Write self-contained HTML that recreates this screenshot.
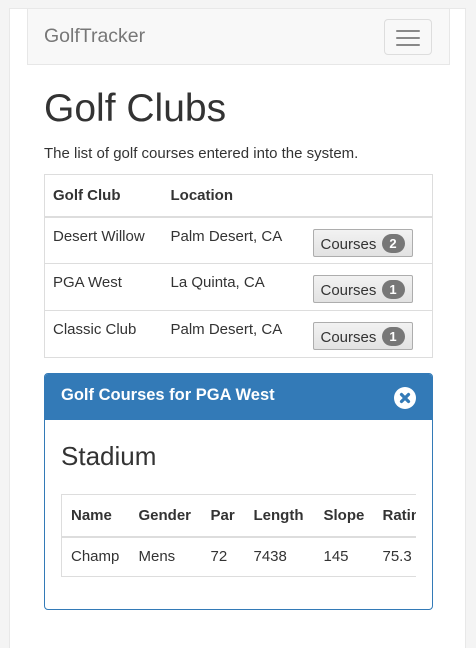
<!DOCTYPE html>
<html><head><style>
*{box-sizing:border-box}
body{margin:0;background:#f4f4f4;font-family:"Liberation Sans",sans-serif;color:#333;font-size:15px;width:476px;height:636px;overflow:hidden;position:relative}
.wrap{position:absolute;left:9px;top:8px;width:457px;height:640px;background:#fff;border-left:1px solid #e8e8e8;border-right:1px solid #e8e8e8;border-top:1px solid #e8e8e8}
.nav{position:absolute;left:17px;top:0;width:423px;height:56px;background:#f8f8f8;border:1px solid #e7e7e7;border-top:none}
.brand{position:absolute;left:16px;top:16px;font-size:19.5px;color:#777}
.tog{position:absolute;left:356px;top:10px;width:48px;height:36px;border:1px solid #ddd;border-radius:4px}
.tog i{position:absolute;left:11px;width:24px;height:2px;background:#888;border-radius:1px}
h1{position:absolute;left:34px;top:78px;margin:0;font-size:39px;font-weight:400;line-height:44px}
p{position:absolute;left:34px;top:136px;margin:0;font-size:15px}
table{border-collapse:collapse;font-size:15px}
.t1{position:absolute;left:34px;top:165px;width:389px;border:1px solid #ddd}
.t1 th,.t1 td{text-align:left;padding:0 8px;vertical-align:top;padding-top:12px}
.t1 th{height:42px;border-bottom:2px solid #ddd}
.t1 td{height:47px;border-top:1px solid #ddd;padding-top:10px}
.btn{display:inline-block;margin-top:1px;width:100px;height:28px;border:1px solid #adadad;border-radius:2px;background:linear-gradient(#f2f2f2,#e2e2e2);font-size:15px;padding:4px 0 0 7px;color:#333;white-space:nowrap}
.badge{display:inline-block;background:#777;color:#fff;border-radius:10px;font-size:13px;font-weight:bold;width:23px;height:19px;text-align:center;line-height:19px;vertical-align:1px;margin-left:1px}
.panel{position:absolute;left:34px;top:364px;width:389px;height:237px;border:1px solid #337ab7;border-radius:4px;overflow:hidden}
.ph{height:46px;background:#337ab7;color:#fff;font-size:16.5px;font-weight:bold;padding:12px 0 0 16px;position:relative}
.x{position:absolute;right:16px;top:13px;width:22px;height:22px;border-radius:50%;background:#fff}
h3{position:absolute;left:16px;top:67px;margin:0;font-size:26px;font-weight:400}
.tw{position:absolute;left:16px;top:120px;width:355px;overflow:hidden}
.t2{border:1px solid #ddd;white-space:nowrap;width:420px;table-layout:fixed}
.t2 th,.t2 td{text-align:left;padding:0 0 0 9px;}
.t2 th{height:42px;border-bottom:2px solid #ddd}
.t2 td{height:40px}
</style></head><body>
<div class="wrap">
<div class="nav"><div class="brand">GolfTracker</div><div class="tog"><i style="top:10px"></i><i style="top:17px"></i><i style="top:24px"></i></div></div>
<h1>Golf Clubs</h1>
<p>The list of golf courses entered into the system.</p>
<table class="t1">
<tr><th style="width:118px">Golf Club</th><th style="width:142px">Location</th><th></th></tr>
<tr><td>Desert Willow</td><td>Palm Desert, CA</td><td><span class="btn">Courses <span class="badge">2</span></span></td></tr>
<tr><td>PGA West</td><td>La Quinta, CA</td><td><span class="btn">Courses <span class="badge">1</span></span></td></tr>
<tr><td>Classic Club</td><td>Palm Desert, CA</td><td><span class="btn">Courses <span class="badge">1</span></span></td></tr>
</table>
<div class="panel">
<div class="ph">Golf Courses for PGA West<div class="x"><svg width="22" height="22" viewBox="0 0 22 22"><path d="M7.5 7.5L14.5 14.5M14.5 7.5L7.5 14.5" stroke="#337ab7" stroke-width="3.2" stroke-linecap="round"/></svg></div></div>
<h3>Stadium</h3>
<div class="tw"><table class="t2">
<colgroup><col style="width:68px"><col style="width:72px"><col style="width:43px"><col style="width:70px"><col style="width:59px"><col style="width:108px"></colgroup>
<tr><th>Name</th><th>Gender</th><th>Par</th><th>Length</th><th>Slope</th><th>Rating</th></tr>
<tr><td>Champ</td><td>Mens</td><td>72</td><td>7438</td><td>145</td><td>75.3</td></tr>
</table></div>
</div>
</div>
</body></html>
